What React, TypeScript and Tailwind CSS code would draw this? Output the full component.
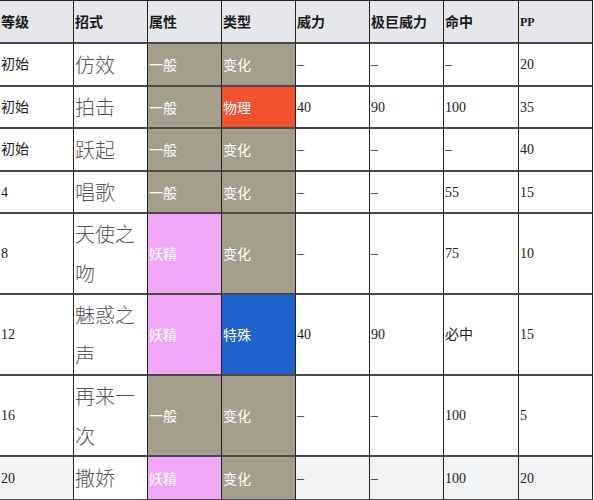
const HEADERS = ['等级', '招式', '属性', '类型', '威力', '极巨威力', '命中', 'PP'];

type Move = {
  level: string;
  name: string;
  attr: 'normal' | 'fairy';
  kind: 'status' | 'physical' | 'special';
  power: string;
  max: string;
  acc: string;
  pp: string;
  h: string;
};

const MOVES: Move[] = [
  { level: '初始', name: '仿效', attr: 'normal', kind: 'status', power: '–', max: '–', acc: '–', pp: '20', h: 'h-[43px]' },
  { level: '初始', name: '拍击', attr: 'normal', kind: 'physical', power: '40', max: '90', acc: '100', pp: '35', h: 'h-[42px]' },
  { level: '初始', name: '跃起', attr: 'normal', kind: 'status', power: '–', max: '–', acc: '–', pp: '40', h: 'h-[43px]' },
  { level: '4', name: '唱歌', attr: 'normal', kind: 'status', power: '–', max: '–', acc: '55', pp: '15', h: 'h-[42px]' },
  { level: '8', name: '天使之吻', attr: 'fairy', kind: 'status', power: '–', max: '–', acc: '75', pp: '10', h: 'h-[81px]' },
  { level: '12', name: '魅惑之声', attr: 'fairy', kind: 'special', power: '40', max: '90', acc: '必中', pp: '15', h: 'h-[81px]' },
  { level: '16', name: '再来一次', attr: 'normal', kind: 'status', power: '–', max: '–', acc: '100', pp: '5', h: 'h-[81px]' },
  { level: '20', name: '撒娇', attr: 'fairy', kind: 'status', power: '–', max: '–', acc: '100', pp: '20', h: 'h-[44px]' },
];

const ATTR = {
  normal: { label: '一般', bg: 'bg-[#a59e8c]' },
  fairy: { label: '妖精', bg: 'bg-[#f0a8f6]' },
};

const KIND = {
  status: { label: '变化', bg: 'bg-[#a59e8c]' },
  physical: { label: '物理', bg: 'bg-[#f25230]' },
  special: { label: '特殊', bg: 'bg-[#2062cc]' },
};

const cell = 'flex items-center border-r border-b-2 border-r-[#222] border-b-[#4a4a4a] pl-px overflow-hidden';
const plain = "font-['Liberation_Serif','Noto_Sans_CJK_SC',serif] text-[14px] text-[#222]";

export default function App() {
  return (
    <div className="w-[594px] h-[500px] overflow-hidden bg-white">
      <div className="grid grid-cols-[74px_74px_74px_74px_74px_74px_75px_74px] w-[593px] border-t border-[#222]">
        {HEADERS.map((h, i) => (
          <div
            key={h}
            className={`${cell} h-[43px] bg-[#e5e7ec] font-bold text-[#1a1a1a] ${
              i === 7
                ? "font-['Liberation_Serif',serif] text-[12px]"
                : "font-['Noto_Sans_CJK_SC',sans-serif] text-[14px]"
            }`}
          >
            {h}
          </div>
        ))}

        {MOVES.map((m, idx) => {
          const last = idx === MOVES.length - 1;
          const soft = last ? 'bg-[#f2f3f5]' : 'bg-white';
          return [
            <div key={`${idx}-lv`} className={`${cell} ${m.h} ${soft} ${plain}`}>{m.level}</div>,
            <div
              key={`${idx}-nm`}
              className={`${cell} ${m.h} bg-white font-['Noto_Sans_CJK_SC',sans-serif] font-light text-[20px] leading-[40px] text-[#555] break-all`}
            >
              {m.name}
            </div>,
            <div key={`${idx}-at`} className={`${cell} ${m.h} ${ATTR[m.attr].bg} font-['Noto_Sans_CJK_SC',sans-serif] text-[14px] text-white`}>
              {ATTR[m.attr].label}
            </div>,
            <div key={`${idx}-kd`} className={`${cell} ${m.h} ${KIND[m.kind].bg} font-['Noto_Sans_CJK_SC',sans-serif] text-[14px] text-white`}>
              {KIND[m.kind].label}
            </div>,
            <div key={`${idx}-pw`} className={`${cell} ${m.h} ${soft} ${plain}`}>{m.power}</div>,
            <div key={`${idx}-mx`} className={`${cell} ${m.h} ${soft} ${plain}`}>{m.max}</div>,
            <div key={`${idx}-ac`} className={`${cell} ${m.h} ${soft} ${plain}`}>{m.acc}</div>,
            <div key={`${idx}-pp`} className={`${cell} ${m.h} ${soft} ${plain}`}>{m.pp}</div>,
          ];
        })}
      </div>
    </div>
  );
}
